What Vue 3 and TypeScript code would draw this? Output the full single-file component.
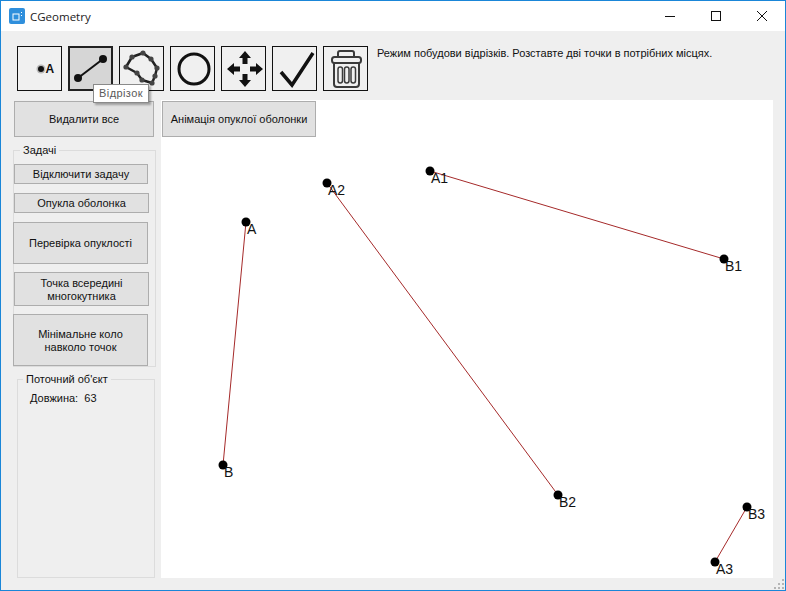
<script setup lang="ts">
type Point = { x: number; y: number; label: string }
type Segment = { a: Point; b: Point }

// canvas coordinates, the panel starts at 161,100 in the window
const segments: Segment[] = [
  { a: { x: 85, y: 122, label: 'A' }, b: { x: 62, y: 365, label: 'B' } },
  { a: { x: 269, y: 71, label: 'A1' }, b: { x: 563, y: 159, label: 'B1' } },
  { a: { x: 166, y: 83, label: 'A2' }, b: { x: 397, y: 395, label: 'B2' } },
  { a: { x: 554, y: 462, label: 'A3' }, b: { x: 586, y: 407, label: 'B3' } },
]

const points = segments.flatMap((s) => [s.a, s.b])

const blobDots = [
  [6, 20], [12, 10], [23, 6], [31, 12], [37, 21], [35, 29], [32, 36], [22, 33], [17, 26],
]
const blobPath = 'M' + blobDots.map((d) => d.join(' ')).join('L') + 'Z'
</script>

<template>
  <div class="window">
    <header class="titlebar">
      <svg class="app-icon" width="16" height="16" viewBox="0 0 16 16">
        <rect width="16" height="16" rx="2" fill="#2f8fdc" />
        <rect x="4" y="6" width="6" height="6" fill="none" stroke="#fff" />
        <path d="M12.5 4v1M12.5 7v1" stroke="#fff" />
      </svg>
      <span class="title">CGeometry</span>
      <div class="controls">
        <svg width="12" height="12" viewBox="0 0 12 12"><path d="M1 6.5h10" stroke="#111" /></svg>
        <svg width="12" height="12" viewBox="0 0 12 12"><rect x="1.5" y="1.5" width="9" height="9" fill="none" stroke="#111" /></svg>
        <svg width="12" height="12" viewBox="0 0 12 12"><path d="M1 1l10 10M11 1L1 11" stroke="#111" /></svg>
      </div>
    </header>

    <div class="body">
      <div class="toolbar">
        <button class="tool" type="button">
          <svg width="43" height="43" viewBox="0 0 43 43">
            <circle cx="23" cy="22" r="3" fill="#111" />
            <circle cx="23" cy="22" r="4.5" fill="#111" opacity="0.25" />
            <text x="27.5" y="26" class="tool-letter">A</text>
          </svg>
        </button>
        <button class="tool active" type="button">
          <svg width="41" height="41" viewBox="0 0 41 41">
            <path d="M8 30L33 11" stroke="#111" stroke-width="2" />
            <circle cx="8" cy="30" r="4" fill="#111" />
            <circle cx="33" cy="11" r="4" fill="#111" />
          </svg>
        </button>
        <button class="tool" type="button">
          <svg width="43" height="43" viewBox="0 0 43 43">
            <path :d="blobPath" fill="none" stroke="#222" stroke-width="2.5" stroke-linejoin="round" />
            <circle v-for="(d, i) in blobDots" :key="i" :cx="d[0]" :cy="d[1]" r="2.6" fill="#444" />
          </svg>
        </button>
        <button class="tool" type="button">
          <svg width="43" height="43" viewBox="0 0 43 43">
            <circle cx="23" cy="22" r="15" fill="none" stroke="#111" stroke-width="3" />
          </svg>
        </button>
        <button class="tool" type="button">
          <svg width="43" height="43" viewBox="0 0 43 43">
            <path
              d="M23 4l6 7h-3.500v6h-5v-6H17zM23 40l-6-7h3.500v-6h5v6H29zM5 22l7-6v3.500h6v5h-6V28zM41 22l-7 6v-3.500h-6v-5h6V16z"
              fill="#111"
            />
          </svg>
        </button>
        <button class="tool" type="button">
          <svg width="43" height="43" viewBox="0 0 43 43">
            <path d="M8 25l11 13L40 6" fill="none" stroke="#111" stroke-width="3.500" />
          </svg>
        </button>
        <button class="tool" type="button">
          <svg width="43" height="43" viewBox="0 0 43 43" fill="none" stroke="#3a3a3a">
            <path d="M14 9V6q0-2 2-2h12q2 0 2 2v3" stroke-width="2" />
            <rect x="8" y="10" width="29" height="6" rx="2.500" stroke-width="2" />
            <path d="M10 16v21q0 3 3 3h19q3 0 3-3V16" stroke-width="2" />
            <rect x="14" y="20" width="4.500" height="16" rx="2.200" stroke-width="1.500" />
            <rect x="20.500" y="20" width="4.500" height="16" rx="2.200" stroke-width="1.500" />
            <rect x="27" y="20" width="4.500" height="16" rx="2.200" stroke-width="1.500" />
          </svg>
        </button>
        <p class="hint">Режим побудови відрізків. Розставте дві точки в потрібних місцях.</p>
        <div class="tooltip">Відрізок</div>
      </div>

      <div class="workspace">
        <aside class="side">
          <button class="btn delete" type="button">Видалити все</button>

          <section class="group tasks">
            <span class="legend">Задачі</span>
            <button class="btn task-off" type="button">Відключити задачу</button>
            <button class="btn task-hull" type="button">Опукла оболонка</button>
            <button class="btn task-check" type="button">Перевірка опуклості</button>
            <button class="btn task-inside" type="button">Точка всередині<br />многокутника</button>
            <button class="btn task-circle" type="button">Мінімальне коло<br />навколо точок</button>
          </section>

          <section class="group current">
            <span class="legend">Поточний об'єкт</span>
            <p class="length">Довжина:&nbsp;&nbsp;63</p>
          </section>
        </aside>

        <main class="canvas">
          <svg class="drawing" width="612" height="478" viewBox="0 0 612 478">
            <line
              v-for="(s, i) in segments"
              :key="i"
              :x1="s.a.x"
              :y1="s.a.y"
              :x2="s.b.x"
              :y2="s.b.y"
              stroke="#a52a2a"
              stroke-width="1"
            />
            <g v-for="p in points" :key="p.label">
              <circle :cx="p.x" :cy="p.y" r="4.5" fill="#000" />
              <text :x="p.x + 1" :y="p.y + 12" class="point-label">{{ p.label }}</text>
            </g>
          </svg>
          <button class="btn animate" type="button">Анімація опуклої оболонки</button>
        </main>
      </div>

      <svg class="grip" width="12" height="12" viewBox="0 0 12 12" fill="#b5b5b5">
        <rect x="9" y="1" width="2" height="2" />
        <rect x="5" y="5" width="2" height="2" />
        <rect x="9" y="5" width="2" height="2" />
        <rect x="1" y="9" width="2" height="2" />
        <rect x="5" y="9" width="2" height="2" />
        <rect x="9" y="9" width="2" height="2" />
      </svg>
    </div>
  </div>
</template>

<style>
html,
body {
  margin: 0;
  background: #fff;
}
</style>

<style scoped>
.window {
  width: 786px;
  height: 591px;
  box-sizing: border-box;
  border: 1px solid #1a86d8;
  display: flex;
  flex-direction: column;
  font-family: "Liberation Sans", Arial, sans-serif;
  font-size: 11px;
  color: #111;
  overflow: hidden;
}

.titlebar {
  height: 30px;
  flex: none;
  display: flex;
  align-items: center;
  background: #fff;
  padding-left: 8px;
}

.title {
  margin-left: 5px;
  font-family: "Open Sans", sans-serif;
  font-size: 11.5px;
  color: #222;
}

.controls {
  margin-left: auto;
  display: flex;
  gap: 34px;
  padding-right: 17px;
}

.body {
  position: relative;
  flex: 1;
  background: #efefef;
  display: flex;
  flex-direction: column;
}

.toolbar {
  position: relative;
  height: 69px;
  flex: none;
  display: flex;
  gap: 6px;
  padding: 15px 0 0 16px;
  box-sizing: border-box;
  align-items: flex-start;
}

.tool {
  width: 45px;
  height: 45px;
  padding: 0;
  border: 1px solid #111;
  background: #f0f0f0;
  display: flex;
  align-items: center;
  justify-content: center;
}

.tool svg {
  display: block;
}

.tool.active {
  border: 2px solid #222;
  background: #d6d6d6;
}

.tool-letter {
  font-family: "Liberation Sans", Arial, sans-serif;
  font-size: 12px;
  font-weight: 700;
  fill: #111;
}

.hint {
  margin: 0 0 0 3px;
  padding-top: 1px;
  line-height: 13px;
  white-space: nowrap;
}

.tooltip {
  position: absolute;
  left: 92px;
  top: 53px;
  width: 56px;
  height: 19px;
  box-sizing: border-box;
  background: #fff;
  border: 1px solid #8a8a8a;
  box-shadow: 2px 2px 2px rgba(0, 0, 0, 0.3);
  color: #5a5a5a;
  text-align: center;
  line-height: 17px;
  letter-spacing: 0.4px;
}

.workspace {
  flex: 1;
  display: flex;
  min-height: 0;
}

.side {
  width: 160px;
  flex: none;
  box-sizing: border-box;
  padding: 1px 0 0 12px;
  display: flex;
  flex-direction: column;
  align-items: flex-start;
}

.btn {
  display: block;
  padding: 1px 0 0;
  border: 1px solid #adadad;
  background: #e1e1e1;
  font: inherit;
  color: #111;
  line-height: 13px;
  box-sizing: border-box;
}

.delete {
  width: 140px;
  height: 36px;
  margin-left: 1px;
}

.group {
  position: relative;
  box-sizing: border-box;
  border: 1px solid #dcdcdc;
}

.legend {
  position: absolute;
  top: -7px;
  background: #efefef;
  padding: 0 3px;
  line-height: 13px;
  white-space: nowrap;
}

.tasks {
  margin-top: 13px;
  width: 143px;
  height: 217px;
  padding-top: 13px;
}

.tasks .legend {
  left: 6px;
}

.task-off {
  width: 134px;
  height: 20px;
  margin-left: 0;
}

.task-hull {
  width: 135px;
  height: 20px;
  margin-top: 9px;
}

.task-check {
  width: 135px;
  height: 42px;
  margin: 9px 0 0 -1px;
}

.task-inside {
  width: 135px;
  height: 34px;
  margin-top: 8px;
}

.task-circle {
  width: 135px;
  height: 52px;
  margin: 8px 0 0 -1px;
}

.current {
  margin: 12px 0 0 4px;
  width: 138px;
  height: 199px;
}

.current .legend {
  left: 5px;
}

.length {
  margin: 12px 0 0 12px;
  line-height: 13px;
}

.canvas {
  position: relative;
  width: 612px;
  height: 478px;
  background: #fff;
  flex: none;
}

.drawing {
  position: absolute;
  left: 0;
  top: 0;
}

.point-label {
  font-family: "Liberation Sans", Arial, sans-serif;
  font-size: 14px;
  fill: #111;
}

.animate {
  position: absolute;
  left: 1px;
  top: 1px;
  width: 154px;
  height: 36px;
}

.grip {
  position: absolute;
  right: 0;
  bottom: 0;
}
</style>
